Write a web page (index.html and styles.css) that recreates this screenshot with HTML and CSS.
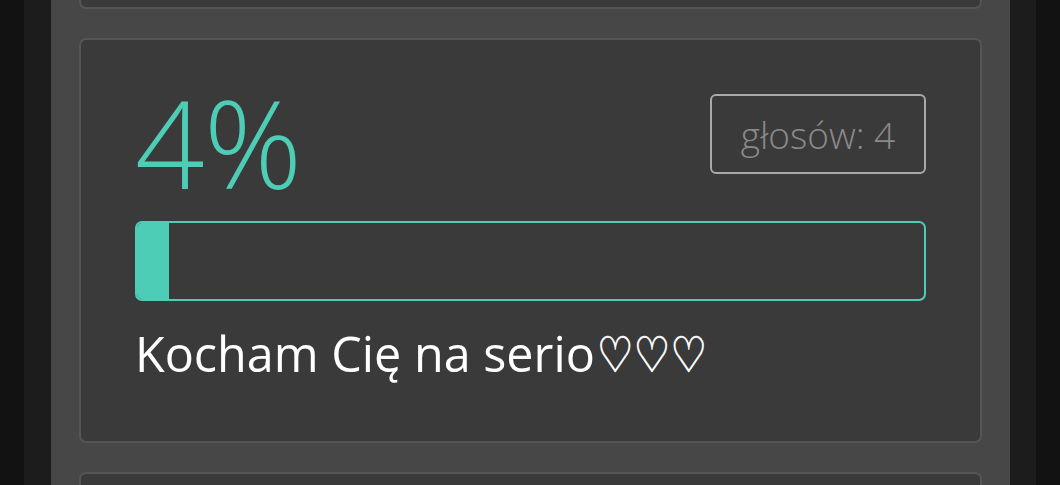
FILE: index.html
```html
<!DOCTYPE html>
<html lang="pl">
<head>
<meta charset="utf-8">
<link rel="stylesheet" href="styles.css">
</head>
<body>
<div class="outer">
  <div class="strip">
    <div class="panel">
      <div class="card card-prev"></div>
      <div class="card result">
        <div class="result-head">
          <div class="percent">4%</div>
          <div class="votes">głosów: 4</div>
        </div>
        <div class="bar"><div class="bar-fill" style="width:4.1%"></div></div>
        <div class="answer">Kocham Cię na serio<span class="hearts">♡♡♡</span></div>
      </div>
      <div class="card card-next"></div>
    </div>
  </div>
</div>
</body>
</html>
```
FILE: styles.css
```css
* { box-sizing: border-box; }
html, body { margin: 0; height: 100%; }
body {
  background: #121212;
  font-family: "Open Sans", "Noto Sans", sans-serif;
  overflow: hidden;
}
.outer {
  height: 485px;
  padding: 0 24px;
}
.strip {
  height: 100%;
  background: #1c1c1c;
  padding: 0 26px 0 27px;
}
.panel {
  height: 100%;
  background: #474747;
  padding: 0 28px;
  display: flex;
  flex-direction: column;
  gap: 29px;
  overflow: hidden;
}
.card {
  background: #3a3a3a;
  border: 2px solid #555555;
  border-radius: 7px;
  flex-shrink: 0;
}
.card-prev {
  height: 20px;
  margin-top: -11px;
}
.card-next {
  height: 14px;
  border-bottom: none;
  border-bottom-left-radius: 0;
  border-bottom-right-radius: 0;
}
.result {
  height: 405px;
  padding: 54px 54px;
  display: flex;
  flex-direction: column;
}
.result > * { flex-shrink: 0; }
.result-head {
  display: flex;
  justify-content: space-between;
  align-items: flex-start;
  height: 127px;
}
.percent {
  color: #4ecdb6;
  font-weight: 300;
  font-size: 122px;
  line-height: 100px;
  letter-spacing: -1px;
  margin-top: -2px;
}
.votes {
  width: 216px;
  height: 80px;
  border: 2px solid #a9a9a9;
  border-radius: 6px;
  color: #8a8a8a;
  font-weight: 300;
  font-size: 37px;
  display: flex;
  align-items: center;
  justify-content: center;
}
.bar {
  height: 80px;
  border: 2px solid #4ecdb6;
  border-radius: 7px;
  overflow: hidden;
  display: flex;
}
.bar-fill {
  background: #4ecdb6;
  height: 100%;
}
.answer {
  margin-top: 22px;
  color: #ffffff;
  font-size: 48.5px;
  line-height: 60px;
  height: 60px;
}
.hearts {
  display: inline-block;
  font-family: "DejaVu Sans", sans-serif;
  font-size: 41px;
  line-height: 1;
  margin-left: 2px;
  -webkit-text-stroke: 0.7px #ffffff;
  transform: scaleY(1.2);
  transform-origin: 50% 85%;
}
```
